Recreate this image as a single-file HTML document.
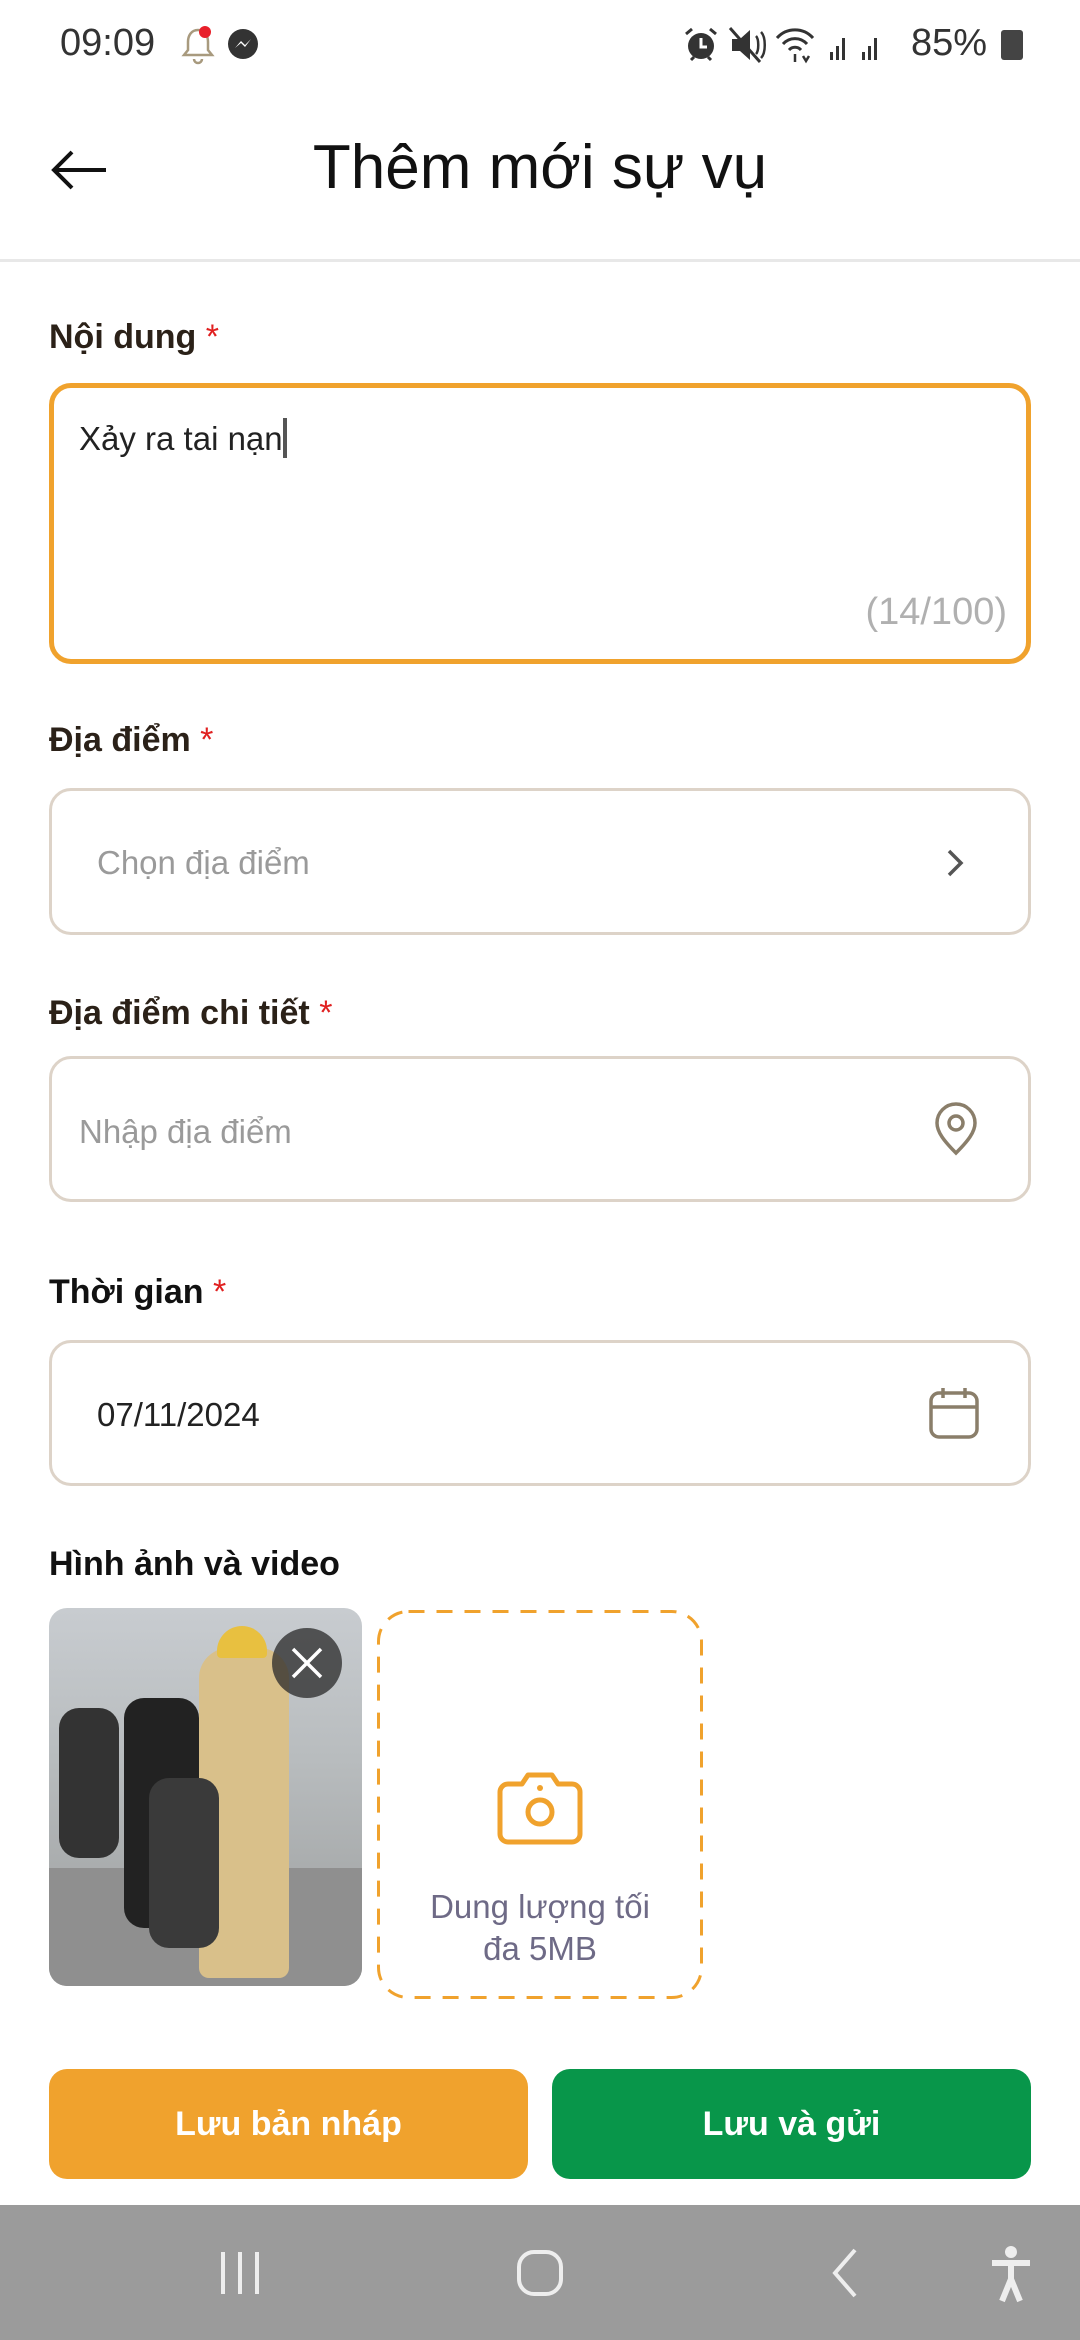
<!DOCTYPE html>
<html><head><meta charset="utf-8"><style>
*{margin:0;padding:0;box-sizing:border-box}
body{width:1080px;height:2340px;background:#fff;font-family:"Liberation Sans",sans-serif;position:relative;overflow:hidden;color:#111}
.a{position:absolute}
.lbl{position:absolute;left:49px;font-size:34px;font-weight:bold;color:#2b2118}
.lbl b{color:#e02020;font-weight:normal}
.box{position:absolute;left:49px;width:982px;border:3px solid #ddd3c8;border-radius:22px}
.ph{position:absolute;font-size:33px;color:#9a9a9a}
</style></head><body>
<div class="a" style="left:60px;top:22px;font-size:38px;color:#333">09:09</div>
<svg class="a" style="left:178px;top:24px" width="40" height="42" viewBox="0 0 40 42"><path d="M20 6c-7 0-10 6-10 12v8l-4 5h28l-4-5v-8c0-6-3-12-10-12z" fill="none" stroke="#a89a7e" stroke-width="2.5"/><path d="M16 35a4 4 0 0 0 8 0" fill="none" stroke="#a89a7e" stroke-width="2.5"/><circle cx="27" cy="8" r="6" fill="#e8202a"/></svg>
<svg class="a" style="left:226px;top:28px" width="34" height="34" viewBox="0 0 34 34"><circle cx="17" cy="16" r="15" fill="#333"/><path d="M9 20l6-7 4 4 6-6-6 8-4-4z" fill="#fff"/></svg>
<svg class="a" style="left:683px;top:26px" width="36" height="38" viewBox="0 0 36 38"><circle cx="18" cy="20" r="13" fill="#333"/><path d="M18 12v9h6" stroke="#fff" stroke-width="3" fill="none"/><path d="M3 8l6-5M33 8l-6-5M8 34l3-3M28 34l-3-3" stroke="#333" stroke-width="3"/></svg>
<svg class="a" style="left:728px;top:26px" width="40" height="38" viewBox="0 0 40 38"><path d="M4 13h8l10-9v30l-10-9H4z" fill="#333"/><path d="M2 2l30 34" stroke="#333" stroke-width="3"/><path d="M28 10c3 3 3 15 0 18M33 6c5 5 5 21 0 26" stroke="#333" stroke-width="2.5" fill="none"/></svg>
<svg class="a" style="left:775px;top:24px" width="120" height="40" viewBox="0 0 120 40"><path d="M2 14a24 24 0 0 1 36 0M8 20a16 16 0 0 1 24 0M14 26a8 8 0 0 1 12 0" fill="none" stroke="#333" stroke-width="3"/><path d="M20 30v8M28 32l3 5 3-5" stroke="#333" stroke-width="2.5" fill="none"/><g fill="#333"><rect x="55" y="28" width="3" height="8"/><rect x="61" y="22" width="3" height="14"/><rect x="67" y="14" width="3" height="22"/><rect x="87" y="28" width="3" height="8"/><rect x="93" y="22" width="3" height="14"/><rect x="99" y="14" width="3" height="22"/></g></svg>
<div class="a" style="left:911px;top:22px;font-size:38px;color:#333">85%</div>
<div class="a" style="left:1001px;top:30px;width:22px;height:30px;background:#444;border-radius:3px"></div>
<svg class="a" style="left:50px;top:148px" width="58" height="44" viewBox="0 0 58 44"><path d="M56 22H4M22 4L4 22l18 18" fill="none" stroke="#111" stroke-width="4"/></svg>
<div class="a" style="left:0;width:1080px;top:132px;text-align:center;font-size:62px;color:#111">Thêm mới sự vụ</div>
<div class="a" style="left:0;top:259px;width:1080px;height:3px;background:#e8e8e8"></div>

<div class="lbl" style="top:318px">Nội dung <b>*</b></div>
<div class="box" style="top:383px;height:281px;border:5px solid #f0a22d"></div>
<div class="a" style="left:79px;top:418px;font-size:33px;color:#222">Xảy ra tai nạn<span style="display:inline-block;width:4px;height:40px;background:#555;vertical-align:-8px"></span></div>
<div class="a" style="right:73px;top:591px;font-size:38px;color:#b0b0b0">(14/100)</div>

<div class="lbl" style="top:721px">Địa điểm <b>*</b></div>
<div class="box" style="top:788px;height:147px"></div>
<div class="ph" style="left:97px;top:844px">Chọn địa điểm</div>
<svg class="a" style="left:943px;top:847px" width="24" height="32" viewBox="0 0 24 32"><path d="M6 4l12 12L6 28" fill="none" stroke="#555" stroke-width="3.5"/></svg>

<div class="lbl" style="top:994px">Địa điểm chi tiết <b>*</b></div>
<div class="box" style="top:1056px;height:146px"></div>
<div class="ph" style="left:79px;top:1113px">Nhập địa điểm</div>
<svg class="a" style="left:930px;top:1101px" width="52" height="56" viewBox="0 0 52 56"><path d="M26 52C14 40 7 31 7 22a19 19 0 0 1 38 0c0 9-7 18-19 30z" fill="none" stroke="#8a7e6a" stroke-width="3.5"/><circle cx="26" cy="22" r="7" fill="none" stroke="#8a7e6a" stroke-width="3.5"/></svg>

<div class="lbl" style="top:1273px;font-weight:600;color:#111">Thời gian <b>*</b></div>
<div class="box" style="top:1340px;height:146px"></div>
<div class="a" style="left:97px;top:1396px;font-size:33px;color:#222">07/11/2024</div>
<svg class="a" style="left:927px;top:1385px" width="54" height="56" viewBox="0 0 54 56"><rect x="4" y="8" width="46" height="44" rx="8" fill="none" stroke="#8a7e6a" stroke-width="3.5"/><path d="M4 22h46M16 3v10M38 3v10" stroke="#8a7e6a" stroke-width="3.5"/></svg>

<div class="lbl" style="top:1545px;font-weight:600;color:#111">Hình ảnh và video</div>
<div class="a" style="left:49px;top:1608px;width:313px;height:378px;border-radius:18px;overflow:hidden;background:linear-gradient(180deg,#c8ccd0 0%,#b8bcbe 40%,#9a9c9c 100%)">
 <div class="a" style="left:0;top:260px;width:313px;height:120px;background:#8f8f8f"></div>
 <div class="a" style="left:150px;top:40px;width:90px;height:330px;background:#d9c08a;border-radius:30px 30px 10px 10px"></div>
 <div class="a" style="left:75px;top:90px;width:75px;height:230px;background:#222;border-radius:20px"></div>
 <div class="a" style="left:10px;top:100px;width:60px;height:150px;background:#333;border-radius:20px"></div>
 <div class="a" style="left:100px;top:170px;width:70px;height:170px;background:#3a3a3a;border-radius:20px"></div>
 <div class="a" style="left:168px;top:18px;width:50px;height:32px;background:#e8c040;border-radius:25px 25px 4px 4px"></div>
</div>
<div class="a" style="left:272px;top:1628px;width:70px;height:70px;border-radius:50%;background:rgba(40,40,40,.75)"></div>
<svg class="a" style="left:289px;top:1645px" width="36" height="36" viewBox="0 0 36 36"><path d="M4 4l28 28M32 4L4 32" stroke="#fff" stroke-width="3.5"/></svg>
<svg class="a" style="left:377px;top:1610px" width="326" height="389" viewBox="0 0 326 389"><rect x="1.5" y="1.5" width="323" height="386" rx="30" fill="none" stroke="#f0a22d" stroke-width="3" stroke-dasharray="16 12"/></svg>
<svg class="a" style="left:494px;top:1760px" width="92" height="92" viewBox="0 0 92 92"><path d="M14 24h14l6-9h24l6 9h14a8 8 0 0 1 8 8v42a8 8 0 0 1-8 8H14a8 8 0 0 1-8-8V32a8 8 0 0 1 8-8z" fill="none" stroke="#f0a22d" stroke-width="5" stroke-linejoin="round"/><circle cx="46" cy="52" r="12" fill="none" stroke="#f0a22d" stroke-width="5"/><circle cx="46" cy="28" r="3" fill="#f0a22d"/></svg>
<div class="a" style="left:377px;width:326px;top:1886px;text-align:center;font-size:33px;line-height:42px;color:#6e6a86">Dung lượng tối<br>đa 5MB</div>

<div class="a" style="left:49px;top:2069px;width:479px;height:110px;border-radius:18px;background:#f0a22d;color:#fff;font-size:34px;font-weight:bold;text-align:center;line-height:110px">Lưu bản nháp</div>
<div class="a" style="left:552px;top:2069px;width:479px;height:110px;border-radius:18px;background:#08964a;color:#fff;font-size:34px;font-weight:bold;text-align:center;line-height:110px">Lưu và gửi</div>

<div class="a" style="left:0;top:2205px;width:1080px;height:135px;background:#9b9b9b"></div>
<svg class="a" style="left:215px;top:2248px" width="50" height="50" viewBox="0 0 50 50"><path d="M8 4v42M25 4v42M42 4v42" stroke="#eee" stroke-width="4"/></svg>
<svg class="a" style="left:515px;top:2248px" width="50" height="50" viewBox="0 0 50 50"><rect x="4" y="4" width="42" height="42" rx="15" fill="none" stroke="#eee" stroke-width="4"/></svg>
<svg class="a" style="left:825px;top:2246px" width="40" height="54" viewBox="0 0 40 54"><path d="M30 4L10 27l20 23" fill="none" stroke="#eee" stroke-width="4"/></svg>
<svg class="a" style="left:988px;top:2245px" width="46" height="60" viewBox="0 0 46 60"><circle cx="23" cy="7" r="6" fill="#eee"/><path d="M4 18h38M23 18v16M23 34l-9 22M23 34l9 22" stroke="#eee" stroke-width="6"/></svg>
</body></html>
